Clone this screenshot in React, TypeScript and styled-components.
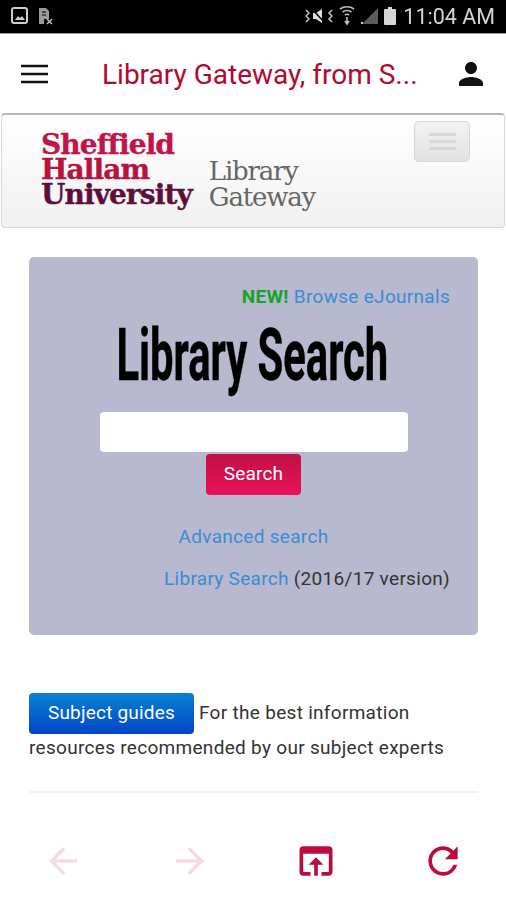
import { FC } from "react";
import styled, { createGlobalStyle } from "styled-components";
import { MdPerson, MdArrowBack, MdArrowForward, MdOpenInBrowser, MdRefresh } from "react-icons/md";

const GlobalStyle = createGlobalStyle`
html, body {
    margin:0;
    padding:0;
    background:#fff;
}
* {
    box-sizing:border-box;
}
`

const StatusIcons: FC = () => (
    <StatusRight>
        <svg width="28" height="20" viewBox="0 0 28 20" fill="none" stroke="#c4c4c4">
            <path d="M1 4l3 3-3 3 3 3-3 3" strokeWidth="1.5" />
            <path d="M27 4l-3 3 3 3-3 3 3 3" strokeWidth="1.5" />
            <path d="M8 7h3l6-4v14l-6-4H8z" fill="#dedede" stroke="none" />
            <path d="M7 3l13 14" strokeWidth="1.500" stroke="#000" />
        </svg>
        <svg width="16" height="22" viewBox="0 0 16 22" fill="none" stroke="#bdbdbd" strokeWidth="1.6">
            <path d="M1 4c4-3 10-3 14 0" />
            <path d="M3.500 7c3-2 6-2 9 0" />
            <path d="M6 10c1.300-1 2.700-1 4 0" />
            <path d="M8 12v6M6 16l2 3 2-3" />
        </svg>
        <svg width="17" height="18" viewBox="0 0 17 18">
            <path d="M17 1v16H1z" fill="#5c5c5c" />
            <rect x="0" y="15" width="2" height="2" fill="#c8c8c8" />
        </svg>
        <svg width="12" height="18" viewBox="0 0 12 18">
            <path d="M4 0h4v2h3a1 1 0 0 1 1 1v14a1 1 0 0 1-1 1H1a1 1 0 0 1-1-1V3a1 1 0 0 1 1-1h3z" fill="#d6d6d6" />
        </svg>
        <Clock>11:04 AM</Clock>
    </StatusRight>
)

const App: FC = () => {
    return (
        <Page>
            <GlobalStyle />
            <StatusBar>
                <StatusLeft>
                    <svg width="18" height="18" viewBox="0 0 18 18" fill="none">
                        <rect x="1" y="1" width="15" height="15" rx="2" stroke="#cfcfcf" strokeWidth="2" />
                        <path d="M4 13l3-4 2 2 2-2 3 4z" fill="#cfcfcf" />
                    </svg>
                    <svg width="17" height="18" viewBox="0 0 17 18" fill="none">
                        <path d="M2 1h7l3 3v8H7v5H2z" fill="#9a9a9a" />
                        <path d="M5 5h4M5 8h4" stroke="#000" />
                        <path d="M10 12l5 5M15 12l-5 5" stroke="#bdbdbd" strokeWidth="1.500" />
                    </svg>
                </StatusLeft>
                <StatusIcons />
            </StatusBar>
            <AppBar>
                <svg width="27" height="20" viewBox="0 0 27 20" stroke="#111" strokeWidth="2.400">
                    <path d="M0 2h27M0 10h27M0 18h27" />
                </svg>
                <AppTitle>Library Gateway, from S...</AppTitle>
                <MdPerson size={36} color="#111" />
            </AppBar>
            <Navbar>
                <Logo>
                    <LogoLine $color="#c0144a">Sheffield</LogoLine>
                    <LogoLine $color="#b8123f">Hallam</LogoLine>
                    <LogoLine $color="#5c0f3a">University</LogoLine>
                </Logo>
                <Gateway>
                    <span>Library</span>
                    <span>Gateway</span>
                </Gateway>
                <Toggle>
                    <ToggleBar />
                    <ToggleBar />
                    <ToggleBar />
                </Toggle>
            </Navbar>
            <Content>
                <SearchPanel>
                    <NewLine>
                        <NewTag>NEW!</NewTag> <PanelLink>Browse eJournals</PanelLink>
                    </NewLine>
                    <Heading><span>Library Search</span></Heading>
                    <SearchInput />
                    <SearchButton>Search</SearchButton>
                    <AdvancedLine>
                        <PanelLink>Advanced search</PanelLink>
                    </AdvancedLine>
                    <VersionLine>
                        <PanelLink>Library Search</PanelLink> (2016/17 version)
                    </VersionLine>
                </SearchPanel>
                <GuideText>
                    <GuideButton>Subject guides</GuideButton> For the best information resources recommended by our subject experts
                </GuideText>
                <Divider />
            </Content>
            <BottomBar>
                <NavIcon $faded><MdArrowBack size={42} /></NavIcon>
                <NavIcon $faded><MdArrowForward size={42} /></NavIcon>
                <NavIcon><MdOpenInBrowser size={44} /></NavIcon>
                <NavIcon><MdRefresh size={44} /></NavIcon>
            </BottomBar>
        </Page>
    )
}

export default App

const Page = styled.div`
display:flex;
flex-direction:column;
width:506px;
height:900px;
overflow:hidden;
background-color:#fff;
font-family:Roboto, "Liberation Sans", sans-serif;
`
const StatusBar = styled.div`
display:flex;
align-items:center;
justify-content:space-between;
height:34px;
flex-shrink:0;
padding:0 11px 1px 11px;
background-color:#000;
border-bottom:1px solid #9a9a9a;
filter:blur(0.5px);
`
const StatusLeft = styled.div`
display:flex;
align-items:center;
gap:8px;
`
const StatusRight = styled.div`
display:flex;
align-items:center;
gap:6px;
`
const Clock = styled.span`
margin-left:1px;
font-size:21.5px;
color:#d4d4d4;
`
const AppBar = styled.div`
display:flex;
align-items:center;
justify-content:space-between;
height:79px;
flex-shrink:0;
padding:0 17px 0 21px;
`
const AppTitle = styled.div`
flex:1;
padding:2px 0 0 54px;
font-size:28px;
color:#b1092f;
white-space:nowrap;
`
const Navbar = styled.div`
position:relative;
display:flex;
align-items:flex-end;
height:115px;
flex-shrink:0;
margin:0 1px;
padding:0 0 20px 39px;
background:linear-gradient(#ffffff, #f1f1f1);
border:1px solid #d8d8d8;
border-top:2px solid #b5b5b5;
border-radius:4px;
`
const Logo = styled.div`
display:flex;
flex-direction:column;
font-family:"DejaVu Serif", serif;
font-weight:bold;
`
const LogoLine = styled.div<{ $color: string }>`
height:25px;
font-size:28px;
line-height:25px;
letter-spacing:-0.9px;
-webkit-text-stroke:0.4px ${props => props.$color};
color:${props => props.$color};
`
const Gateway = styled.div`
display:flex;
flex-direction:column;
margin:0 0 -3px 17px;
font-family:"DejaVu Serif", serif;
font-size:26px;
line-height:26px;
letter-spacing:-1.2px;
color:#666;
`
const Toggle = styled.div`
position:absolute;
top:6px;
right:34px;
display:flex;
flex-direction:column;
align-items:center;
justify-content:center;
gap:4px;
width:56px;
height:41px;
background:linear-gradient(#f2f2f2, #e2e2e2);
border:1px solid #d6d6d6;
border-radius:5px;
`
const ToggleBar = styled.div`
width:27px;
height:3px;
background-color:#d8d8d8;
`
const Content = styled.div`
flex:1;
padding:29px 28px 0 29px;
`
const SearchPanel = styled.div`
display:flex;
flex-direction:column;
align-items:center;
height:378px;
padding:28px 28px 0;
background-color:#b8b8cf;
border-radius:5px;
color:#333;
font-size:19px;
letter-spacing:0.3px;
`
const NewLine = styled.div`
align-self:flex-end;
height:24px;
line-height:24px;
`
const NewTag = styled.span`
font-weight:bold;
color:#16a32a;
`
const PanelLink = styled.span`
color:#3a8dd0;
`
const Heading = styled.div`
display:flex;
justify-content:center;
width:100%;
height:83px;
margin-top:3px;
padding-top:2px;
padding-right:3px;
font-size:72px;
font-weight:bold;
line-height:83px;
letter-spacing:0;
white-space:nowrap;
color:#000;
-webkit-text-stroke:0.5px #000;
& > span {
    flex-shrink:0;
    transform:scaleX(0.58);
}
`
const SearchInput = styled.div`
width:308px;
height:40px;
flex-shrink:0;
margin-top:17px;
background-color:#fff;
border-radius:4px;
`
const SearchButton = styled.div`
display:flex;
align-items:center;
justify-content:center;
width:95px;
height:41px;
flex-shrink:0;
margin-top:2px;
padding-bottom:3px;
background:linear-gradient(#c20f45, #e8125a);
border-radius:4px;
color:#fff;
font-size:19px;
letter-spacing:0.2px;
`
const AdvancedLine = styled.div`
height:24px;
margin-top:30px;
line-height:24px;
`
const VersionLine = styled.div`
align-self:flex-end;
height:24px;
margin-top:18px;
line-height:24px;
`
const GuideText = styled.div`
margin-top:58px;
font-size:19px;
line-height:28px;
letter-spacing:0.3px;
color:#333;
`
const GuideButton = styled.span`
display:inline-block;
width:165px;
height:41px;
background:linear-gradient(#0a80d2, #0046c8);
border-radius:4px;
color:#fff;
font-size:19px;
line-height:39px;
letter-spacing:0.2px;
text-align:center;
vertical-align:middle;
`
const Divider = styled.div`
height:2px;
margin-top:29px;
background-color:#f2f2f2;
`
const BottomBar = styled.div`
display:grid;
grid-template-columns:repeat(4, 1fr);
align-items:center;
height:78px;
flex-shrink:0;
`
const NavIcon = styled.div<{ $faded?: boolean }>`
display:flex;
justify-content:center;
color:${props => props.$faded ? '#f3dce2' : '#bd0b3e'};
`
